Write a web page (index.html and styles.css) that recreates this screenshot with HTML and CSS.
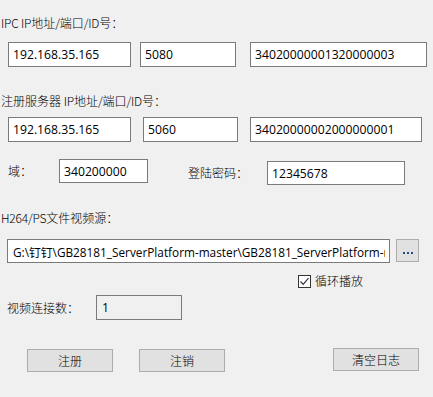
FILE: index.html
```html
<!DOCTYPE html>
<html>
<head>
<meta charset="utf-8">
<link rel="stylesheet" href="styles.css">
</head>
<body>
<div class="dialog">
  <div class="lbl l1"><span class="en">IPC IP</span>地址<span class="en">/</span>端口<span class="en">/ID</span>号：</div>
  <div class="row r1">
    <input class="fld w123" value="192.168.35.165">
    <input class="fld w96 ml9" value="5080">
    <input class="fld w177 ml14" value="34020000001320000003">
  </div>
  <div class="lbl l2">注册服务器 <span class="en">IP</span>地址<span class="en">/</span>端口<span class="en">/ID</span>号：</div>
  <div class="row r2">
    <input class="fld w123" value="192.168.35.165">
    <input class="fld w95 ml12" value="5060">
    <input class="fld w172 ml12" value="34020000002000000001">
  </div>
  <div class="row r3">
    <div class="lbl cap-domain">域：</div>
    <input class="fld w89" value="340200000">
    <div class="lbl cap-pwd">登陆密码：</div>
    <input class="fld w138 down2" value="12345678">
  </div>
  <div class="lbl l4"><span class="en">H264/PS</span>文件视频源：</div>
  <div class="row r4">
    <input class="fld path" value="G:\钉钉\GB28181_ServerPlatform-master\GB28181_ServerPlatform-master\Debug\test.h264">
    <button class="btn dots"><span class="dot"></span><span class="dot"></span><span class="dot"></span></button>
  </div>
  <div class="row r5">
    <span class="chk">
      <svg width="11" height="11" viewBox="0 0 11 11"><path d="M1.5 5.5 L4.2 8.3 L9.5 2.2" fill="none" stroke="#333" stroke-width="1.2"/></svg>
    </span>
    <span class="lbl chk-txt">循环播放</span>
  </div>
  <div class="row r6">
    <div class="lbl cap-conn">视频连接数：</div>
    <input class="fld w86 ro" value="1" readonly>
  </div>
  <div class="row r7">
    <button class="btn b86 ml27">注册</button>
    <button class="btn b86 ml26">注销</button>
    <button class="btn b86 ml108 up1">清空日志</button>
  </div>
</div>
</body>
</html>
```

FILE: styles.css
```css
html, body {
  margin: 0;
  padding: 0;
  background: #f0f0f0;
  width: 433px;
  height: 397px;
  overflow: hidden;
}
.dialog {
  display: flex;
  flex-direction: column;
}
.lbl {
  font-family: "Noto Sans CJK SC", "Noto Sans", sans-serif;
  font-size: 12px;
  font-weight: 300;
  line-height: 14px;
  color: #000;
  white-space: nowrap;
}
.en {
  letter-spacing: -0.2px;
}
.row {
  display: flex;
  align-items: flex-start;
}
.fld {
  box-sizing: border-box;
  height: 25px;
  margin: 0;
  border: 1px solid #7a7a7a;
  background: #fff;
  padding: 0 4px;
  font-family: "Open Sans", "Noto Sans CJK SC", sans-serif;
  font-size: 12.2px;
  color: #000;
  outline: none;
}
.l1 { margin: 16px 0 0 1px; }
.r1 { margin: 12px 0 0 8px; }
.l2 { margin: 27px 0 0 1px; }
.r2 { margin: 9px 0 0 8px; height: 25px; }
.r3 { margin: 17px 0 0 0; }
.l4 { margin: 26px 0 0 1px; }
.r4 { margin: 14px 0 0 7px; }
.r5 { margin: 11px 0 0 298px; align-items: center; }
.r6 { margin: 7px 0 0 0; }
.r7 { margin: 29px 0 0 0; }

.w123 { width: 123px; }
.w96 { width: 96px; }
.w95 { width: 95px; }
.w177 { width: 177px; }
.w172 { width: 172px; }
.w89 { width: 89px; height: 24px; }
.w138 { width: 138px; height: 24px; }
.w86 { width: 86px; }
.ml9 { margin-left: 9px; }
.ml12 { margin-left: 12px; }
.ml14 { margin-left: 14px; }
.down2 { margin-top: 2px; }

.cap-domain { margin: 5px 0 0 8px; width: 51px; }
.cap-pwd { margin: 7px 0 0 40px; width: 79px; }
.cap-conn { margin: 6px 0 0 7px; width: 89px; }

.path { width: 383px; height: 24px; font-size: 11.8px; padding-left: 5px; }
.ro { background: #f0f0f0; padding-left: 5px; }

.btn {
  box-sizing: border-box;
  margin: 0;
  padding: 0;
  border: 1px solid #adadad;
  background: #e1e1e1;
  font-family: "Noto Sans CJK SC", sans-serif;
  font-size: 12px;
  font-weight: 300;
  color: #000;
  cursor: default;
}
.dots {
  width: 23px;
  height: 23px;
  margin-left: 6px;
  display: flex;
  align-items: flex-end;
  justify-content: center;
  gap: 2px;
  padding-bottom: 7px;
}
.dot {
  width: 2px;
  height: 2px;
  background: #1f4f7a;
}
.b86 { width: 86px; height: 23px; line-height: 21px; }
.ml27 { margin-left: 27px; }
.ml26 { margin-left: 26px; }
.ml108 { margin-left: 108px; }
.up1 { margin-top: -1px; }

.chk {
  box-sizing: border-box;
  width: 13px;
  height: 13px;
  border: 1px solid #333;
  background: #fff;
  display: flex;
  align-items: center;
  justify-content: center;
}
.chk-txt { margin-left: 4px; }
```
